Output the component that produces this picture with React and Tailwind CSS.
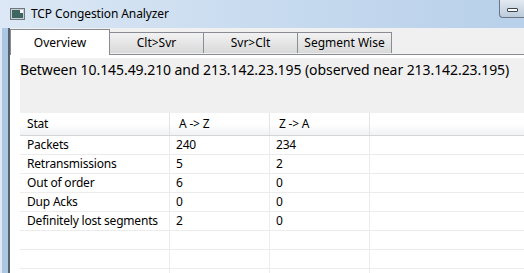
import React from "react";

const rows = [
  ["Packets", "240", "234"],
  ["Retransmissions", "5", "2"],
  ["Out of order", "6", "0"],
  ["Dup Acks", "0", "0"],
  ["Definitely lost segments", "2", "0"],
  ["", "", ""],
  ["", "", ""],
  ["", "", ""],
];

const tabs = ["Overview", "Clt>Svr", "Svr>Clt", "Segment Wise"];

function AppIcon() {
  return (
    <svg width="15" height="12" viewBox="0 0 15 12">
      <rect x="0.5" y="0.5" width="14" height="11" fill="#c9ced3" stroke="#6d7780" />
      <rect x="2" y="2" width="11" height="8" fill="#3e6660" />
      <rect x="10" y="2" width="3" height="3" fill="#f4f6f7" />
    </svg>
  );
}

function TitleBar() {
  return (
    <div className="relative h-[28px] shrink-0 flex items-center pl-[10px] bg-gradient-to-r from-[#dce8f5] via-[#c8dbef] to-[#b8d0ea]">
      <AppIcon />
      <span className="ml-[6px] text-[12px] tracking-[-0.1px] text-black leading-none">TCP Congestion Analyzer</span>
      {/* minimize button */}
      <div className="absolute right-0 top-0 w-[25px] h-[18px] rounded-bl-[4px] border border-t-0 border-r-0 border-[#6b7685] bg-gradient-to-b from-[#e2e9f1] to-[#bccbdb] flex items-center justify-center">
        <div className="w-[11px] h-[4px] border border-[#3b4450] bg-white rounded-[1px] mt-[2px]" />
      </div>
    </div>
  );
}

export default function App() {
  return (
    <div
      className="w-[524px] h-[273px] overflow-hidden flex flex-col bg-[#c4d8ee]"
      style={{ fontFamily: '"Noto Sans", "Open Sans", sans-serif' }}
    >
      <TitleBar />
      <div className="flex flex-1 min-h-0">
        <div className="w-[8px] shrink-0 border-l-2 border-[#dfe9f5] bg-[#adc6e2]" />
        <div className="flex-1 min-w-0 flex flex-col border-l-2 border-[#56626f] bg-[#f0f0f0]">
          {/* tab strip */}
          <div className="h-[27px] shrink-0 pt-[2px] flex items-end relative border-b border-[#898c95]">
            {tabs.map((t, i) =>
              i === 0 ? (
                <div
                  key={t}
                  className="w-[100px] h-[26px] -mb-px bg-white border border-b-0 border-[#898c95] flex items-center justify-center text-[12px] text-black z-10"
                >
                  {t}
                </div>
              ) : (
                <div
                  key={t}
                  className="w-[95px] h-[21px] mb-[1px] -ml-px bg-gradient-to-b from-[#f2f2f2] to-[#d9d9d9] border border-b-0 border-[#898c95] flex items-center justify-center text-[12px] text-black"
                >
                  {t}
                </div>
              )
            )}
          </div>
          {/* tab page */}
          <div className="flex-1 min-h-0 overflow-hidden bg-white pl-[10px] pt-[3px] flex flex-col">
            <div className="h-[55px] shrink-0 bg-[#f0f0f0] pt-[2px]">
              <div className="text-[14px] tracking-[-0.07px] text-black leading-[20px] whitespace-nowrap">
                Between 10.145.49.210 and 213.142.23.195 (observed near 213.142.23.195)
              </div>
            </div>
            <div className="shrink-0 bg-white text-[12px] tracking-[-0.2px] text-black">
              <div className="grid grid-cols-[150px_100px_100px_1fr] h-[23px] border-b border-[#d5d5d5] bg-gradient-to-b from-white via-white to-[#f1f2f4]">
                <div className="pl-[7px] flex items-center border-r border-[#e4e4e4]">Stat</div>
                <div className="pl-[9px] flex items-center border-r border-[#e4e4e4]">A -&gt; Z</div>
                <div className="pl-[9px] flex items-center border-r border-[#e4e4e4]">Z -&gt; A</div>
                <div />
              </div>
              {rows.map((r, i) => (
                <div
                  key={i}
                  className="grid grid-cols-[150px_100px_100px_1fr] h-[19px] border-b border-[#ececec]"
                >
                  <div className="pl-[7px] flex items-center border-r border-[#ececec]">{r[0]}</div>
                  <div className="pl-[6px] flex items-center border-r border-[#ececec]">{r[1]}</div>
                  <div className="pl-[6px] flex items-center border-r border-[#ececec]">{r[2]}</div>
                  <div />
                </div>
              ))}
            </div>
          </div>
        </div>
      </div>
    </div>
  );
}
